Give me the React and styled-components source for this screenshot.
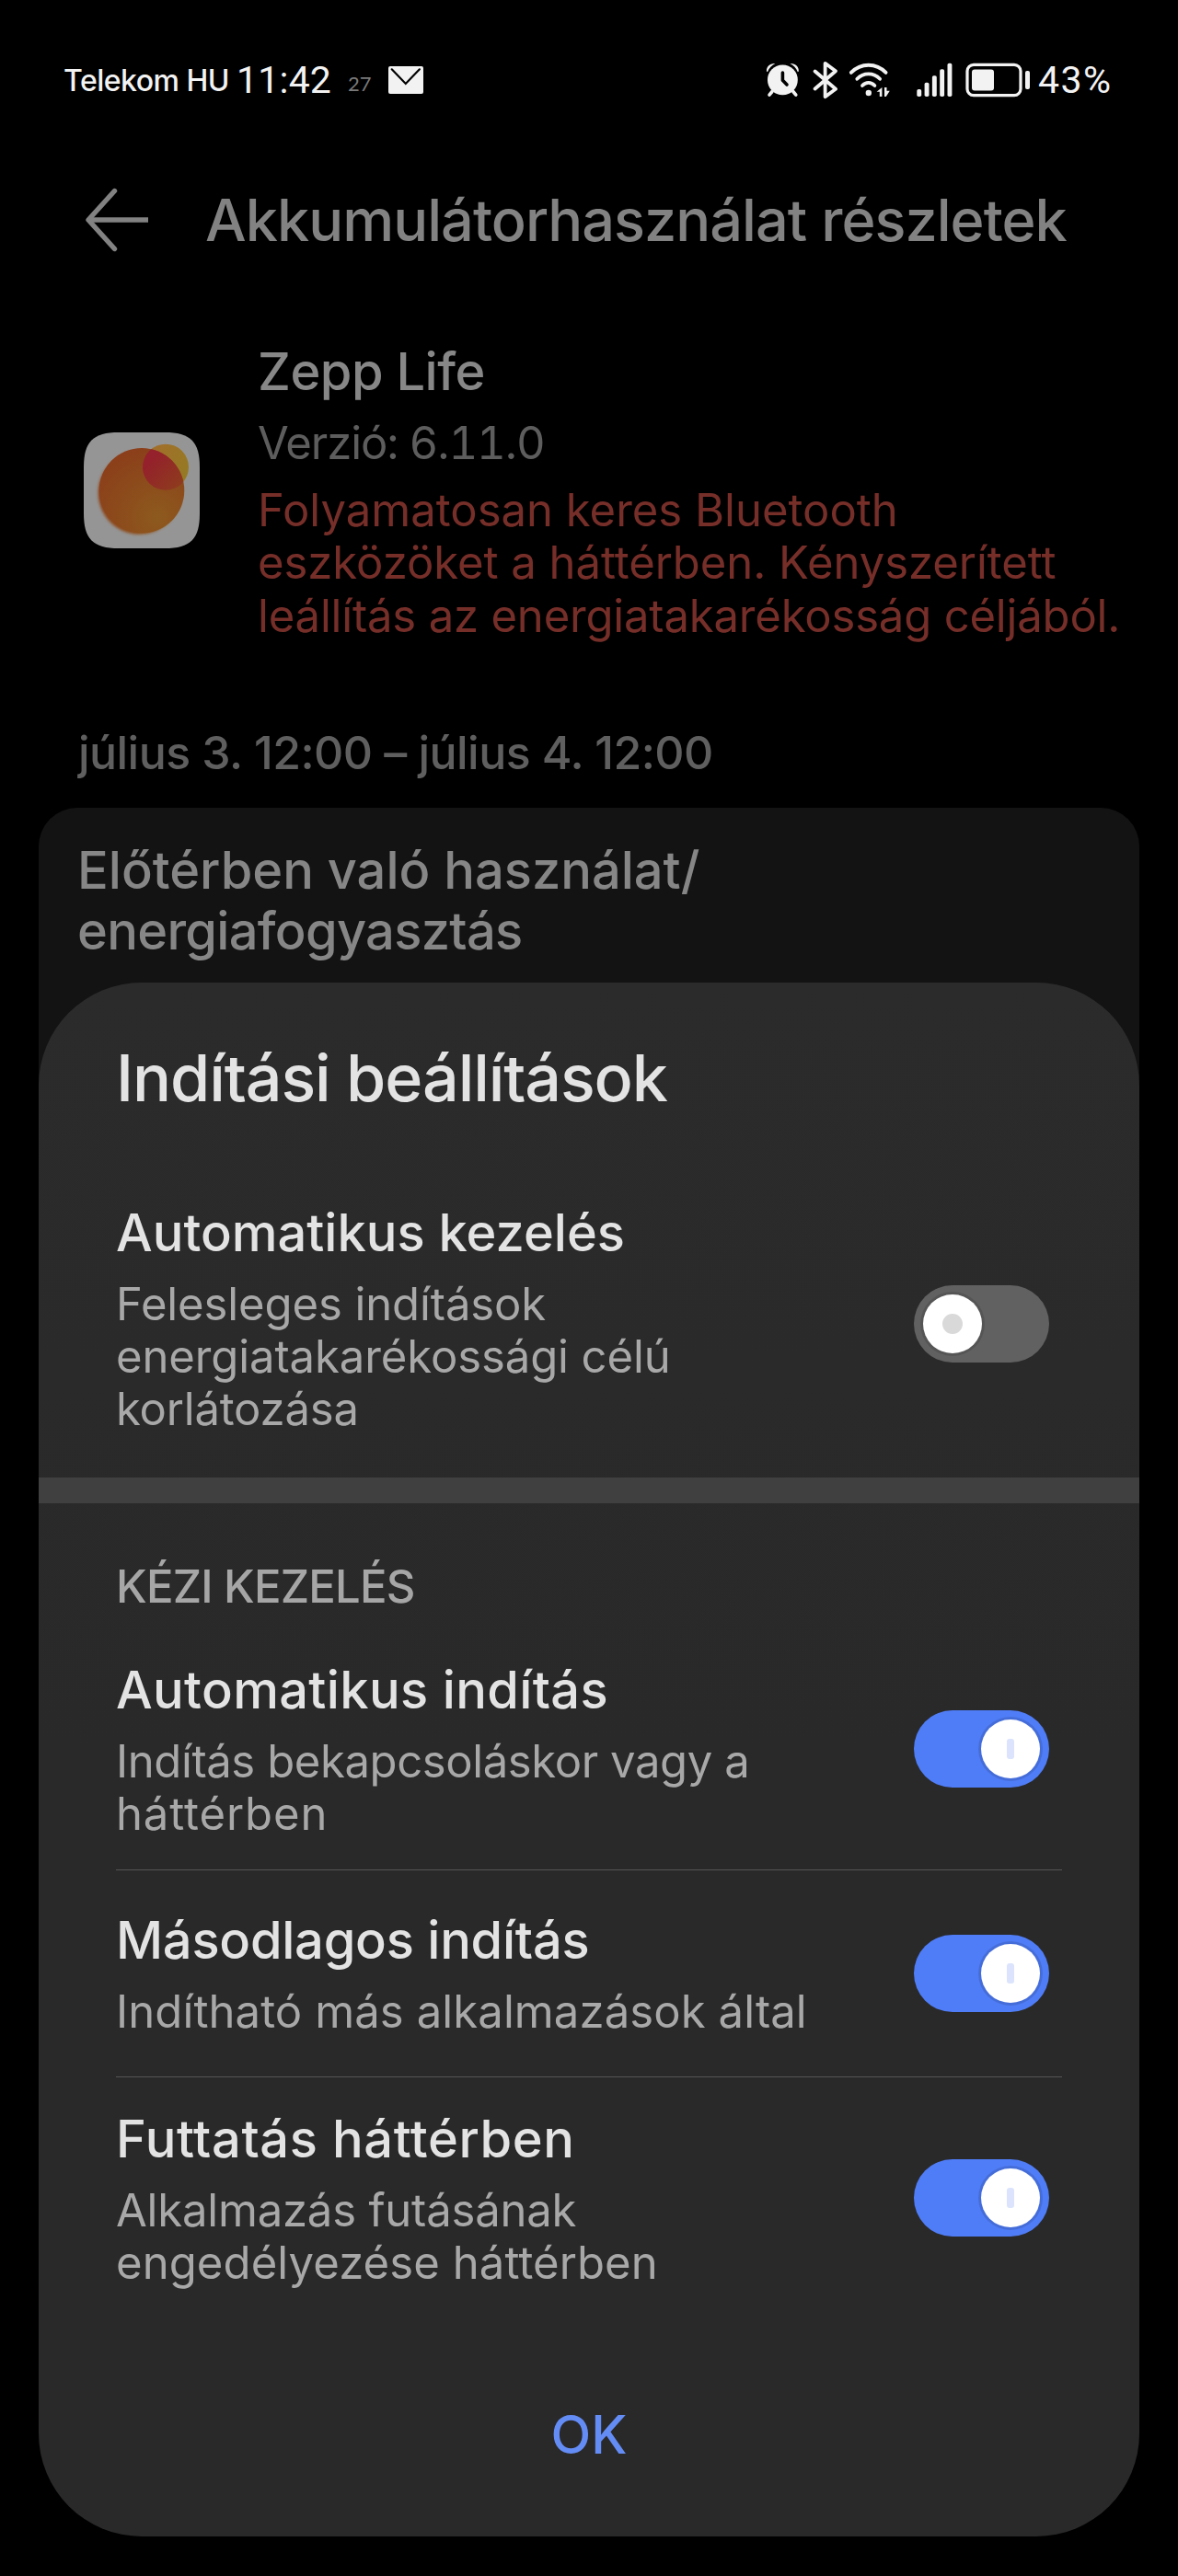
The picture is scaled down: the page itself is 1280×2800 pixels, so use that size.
import React, { useState } from 'react';
import styled, { createGlobalStyle } from 'styled-components';


const GlobalStyle = createGlobalStyle`
  * {
    box-sizing: border-box;
  }
  body {
    margin: 0;
    background: #000;
    font-family: Inter, 'Liberation Sans', sans-serif;
  }
`;

const Screen = styled.div`
  position: relative;
  width: 1280px;
  height: 2800px;
  overflow: hidden;
  background: #000;
`;

// one line of a text block, with its own tracking
const Line = styled.span`
  display: block;
  letter-spacing: ${p => p.$track || 0}px;
  white-space: nowrap;
`;

/* status bar */

const StatusBar = styled.div`
  display: flex;
  align-items: center;
  justify-content: space-between;
  height: 174px;
  padding: 0 72px 0 69px;
  color: #f2f2f2;
`;

const StatusGroup = styled.div`
  display: flex;
  align-items: center;

  svg {
    display: block;
    flex: none;
  }
`;

const Carrier = styled.span`
  font-size: 32px;
  font-weight: 500;
  letter-spacing: -0.5px;
`;

const Clock = styled.span`
  width: 103px;
  margin-left: 8px;
  font-family: Roboto, sans-serif;
  font-size: 41px;
  font-weight: 450;
  letter-spacing: 0.2px;
  white-space: nowrap;
`;

const NetSpeed = styled.span`
  width: 26px;
  margin: 6px 18px 0 18px;
  font-family: Lato, sans-serif;
  font-size: 22px;
  color: #7a7a7a;
`;

const Percent = styled.span`
  width: 80px;
  font-family: Roboto, sans-serif;
  font-size: 41px;
  font-weight: 450;
  letter-spacing: 1.4px;
  white-space: nowrap;
`;

const Spacer = styled.i`
  flex: none;
  width: ${p => p.$w}px;
`;

/* page under the dialog */

const AppBar = styled.header`
  display: flex;
  align-items: center;
  gap: 59px;
  height: 130px;
  padding-left: 92px;
`;

const PageTitle = styled.h1`
  margin: 0;
  font-size: 63px;
  font-weight: 500;
  letter-spacing: -0.95px;
  line-height: 80px;
  white-space: nowrap;
  color: #828282;
`;

const AppInfo = styled.section`
  display: flex;
  align-items: flex-start;
  gap: 63px;
  padding: 67px 0 0 91px;

  svg {
    flex: none;
    margin-top: 99px;
  }
`;

const AppText = styled.div`
  display: flex;
  flex-direction: column;
  gap: 16px;
`;

const AppName = styled.div`
  font-size: 56px;
  font-weight: 500;
  line-height: 66px;
  letter-spacing: -0.5px;
  color: #878787;
`;

const Version = styled.div`
  font-size: 49px;
  line-height: 57px;
  letter-spacing: -1.05px;
  font-variant-numeric: tabular-nums;
  color: #5d5d5d;
`;

const Warning = styled.div`
  font-size: 49px;
  line-height: 57.3px;
  color: #762e29;
`;

const Period = styled.div`
  margin: 87px 0 27px 85px;
  font-size: 50px;
  font-weight: 500;
  line-height: 66px;
  letter-spacing: -0.55px;
  color: #5f5f5f;
`;

const UsageCard = styled.section`
  height: 500px;
  margin: 0 42px;
  padding: 35px 42px;
  border-radius: 42px;
  background: #131313;
  color: #868686;
  font-size: 56px;
  font-weight: 500;
  line-height: 66px;
`;

/* dialog */

const Sheet = styled.div`
  position: absolute;
  left: 42px;
  bottom: 43px;
  display: flex;
  flex-direction: column;
  width: 1196px;
  height: 1689px;
  padding: 62px 0 77px;
  border-radius: 112px;
  background: linear-gradient(#2b2b2b, #292929 50%);
`;

const SheetTitle = styled.h2`
  margin: 0 84px 58px;
  font-size: 70px;
  font-weight: 500;
  line-height: 84px;
  letter-spacing: -1.1px;
  color: #e3e3e3;
`;

const Band = styled.div`
  height: 28px;
  background: #404040;
`;

const SectionLabel = styled.div`
  margin: 62px 84px 17px;
  font-size: 49px;
  font-weight: 500;
  line-height: 57px;
  letter-spacing: -0.8px;
  color: #a6a6a6;
`;

const Row = styled.div`
  display: flex;
  align-items: center;
  justify-content: space-between;
  margin: 0 84px;
  padding: ${p => p.$pad} 14px ${p => p.$padBottom} 0;
  border-bottom: ${p => (p.$line ? '1px solid #555' : 'none')};
`;

const RowTitle = styled.div`
  font-size: 56px;
  font-weight: 500;
  line-height: 66px;
  letter-spacing: ${p => p.$track || 0}px;
  color: #e3e3e3;
`;

const RowText = styled.div`
  margin-top: 16px;
  font-size: 49px;
  line-height: 57px;
  color: #a8a8a8;
`;

const Track = styled.button`
  display: flex;
  flex: none;
  align-items: center;
  justify-content: ${p => (p.$on ? 'flex-end' : 'flex-start')};
  width: 147px;
  height: 84px;
  margin: ${p => p.$nudge}px 0 0;
  padding: 0 10px;
  border: 0;
  border-radius: 42px;
  background: ${p => (p.$on ? '#4f7df7' : '#616161')};
`;

const Knob = styled.span`
  display: flex;
  align-items: center;
  justify-content: center;
  width: 64px;
  height: 64px;
  border-radius: 50%;
  background: #fff;
  box-shadow: 0 0 0 3px rgba(0, 0, 0, 0.12);

  &::after {
    content: '';
    width: ${p => (p.$on ? 8 : 22)}px;
    height: 22px;
    border-radius: ${p => (p.$on ? 3 : 11)}px;
    background: ${p => (p.$on ? '#dbe4fc' : '#d9d9d9')};
  }
`;

const OkButton = styled.button`
  align-self: center;
  margin-top: auto;
  padding: 0 40px;
  border: 0;
  background: none;
  font: 500 57px/66px Inter, sans-serif;
  color: #648cf5;
`;


const MailIcon = () => (
  <svg width="38" height="30" viewBox="0 0 38 30">
    <rect width="38" height="30" rx="2" fill="#f2f2f2" />
    <path d="M3.7 3.3 18.8 19 33.9 3.3" fill="none" stroke="#000" strokeWidth="2.2" strokeLinecap="round" />
  </svg>
);

const AlarmIcon = () => (
  <svg width="37" height="38" viewBox="0 0 37 38" fill="#f2f2f2">
    <circle cx="18.4" cy="18.9" r="16.4" />
    <path d="M1 9.5C.6 4.5 4.5.6 10.3 1 6.6 3 3.6 6 2 10.3Z" />
    <path d="M35.8 9.5C36.2 4.5 32.3.6 26.5 1c3.7 2 6.7 5 8.3 9.3Z" />
    <path d="M7 31.5 4 35.2M29.8 31.5l3 3.7" stroke="#f2f2f2" strokeWidth="3.6" strokeLinecap="round" />
    <path d="M18.4 11v8.300l4.6 4.7" fill="none" stroke="#000" strokeWidth="3.6" strokeLinecap="round" strokeLinejoin="round" />
  </svg>
);

const BluetoothIcon = () => (
  <svg width="28" height="42" viewBox="0 0 28 42" fill="none" stroke="#f2f2f2" strokeWidth="3.8" strokeLinecap="round" strokeLinejoin="round">
    <path d="M2.6 11.5 25 30.8 13.6 39.2V2.8L25 11.2 2.6 30.5" />
  </svg>
);

const WifiIcon = () => (
  <svg width="45" height="40" viewBox="0 0 45 40" fill="none" stroke="#f2f2f2" strokeWidth="3.8" strokeLinecap="round">
    <path d="M2.8 11.9C13.5 1 29.9 1 40.6 11.9" />
    <path d="M9.3 18.8c7-7.2 17.8-7.2 24.8 0" />
    <path d="M15 26c4-4.2 9.4-4.2 13.4 0" />
    <circle cx="21.8" cy="34" r="3.2" fill="#f2f2f2" stroke="none" />
    <path d="M36.4 28v10h-2.6v-5.2h-3.2ZM39 28h2.5v3.8h3.3L40.8 38H39Z" fill="#f2f2f2" stroke="none" />
  </svg>
);

const SignalIcon = () => (
  <svg width="39" height="38" viewBox="0 0 39 38" fill="#f2f2f2">
    {[29, 21.7, 14.3, 7.3, 0.7].map((y, i) => (
      <rect key={y} x={0.3 + i * 8.3} y={y} width="4.9" height={37 - y} rx="1.8" />
    ))}
  </svg>
);

const BatteryIcon = () => (
  <svg width="70" height="38" viewBox="0 0 70 38" fill="#f2f2f2">
    <rect x="2" y="2.3" width="58" height="33.4" rx="7" fill="none" stroke="#f2f2f2" strokeWidth="3.2" />
    <rect x="7" y="7.5" width="24" height="23" rx="3" />
    <rect x="65" y="9" width="5" height="20" rx="2" />
  </svg>
);

const BackIcon = () => (
  <svg width="72" height="70" viewBox="0 0 72 70" fill="none" stroke="#828282" strokeWidth="5.4" strokeLinejoin="round">
    <path d="M32.5 3.500 4 35l28.500 31.500" strokeLinecap="round" />
    <path d="M4 35h65" />
  </svg>
);

const ZeppIcon = () => (
  <svg width="126" height="126" viewBox="0 0 126 126">
    <defs>
      <radialGradient id="sun" gradientUnits="userSpaceOnUse" cx="80" cy="92" r="80">
        <stop offset="0" stopColor="#8d5a1e" />
        <stop offset="0.6" stopColor="#8c491b" />
        <stop offset="1" stopColor="#8b3e1a" />
      </radialGradient>
      <linearGradient id="moon" x1="0" y1="0" x2="1" y2="0.6">
        <stop offset="0.3" stopColor="#a0702a" />
        <stop offset="1" stopColor="#957a24" />
      </linearGradient>
      <linearGradient id="overlap" x1="0" y1="0.2" x2="0.9" y2="1">
        <stop offset="0.2" stopColor="#94212b" />
        <stop offset="1" stopColor="#8d3f1c" />
      </linearGradient>
      <clipPath id="sunClip">
        <circle cx="63" cy="63.3" r="46.3" />
      </clipPath>
      <filter id="glow" x="-20%" y="-20%" width="140%" height="140%">
        <feGaussianBlur stdDeviation="1.8" />
      </filter>
    </defs>
    <path
      fill="#959595"
      d="M0 38C0 10 10 0 38 0h50c28 0 38 10 38 38v50c0 28-10 38-38 38H38C10 126 0 116 0 88Z"
    />
    <circle cx="89" cy="37.7" r="25" fill="url(#moon)" />
    <circle cx="60.5" cy="66" r="44.8" fill="url(#sun)" filter="url(#glow)" />
    <circle cx="63" cy="63.3" r="46.3" fill="url(#sun)" />
    <circle cx="89" cy="37.7" r="25" fill="url(#overlap)" clipPath="url(#sunClip)" />
  </svg>
);


const Toggle = ({ on, nudge, onClick }) => (
  <Track type="button" role="switch" aria-checked={on} $on={on} $nudge={nudge} onClick={onClick}>
    <Knob $on={on} />
  </Track>
);

const Lines = ({ lines }) => lines.map(([text, track]) => (
  <Line key={text} $track={track}>{text}</Line>
));

const warning = [
  ['Folyamatosan keres Bluetooth', 0],
  ['eszközöket a háttérben. Kényszerített', -0.05],
  ['leállítás az energiatakarékosság céljából.', -0.18],
];

const autoRow = {
  id: 'auto',
  title: 'Automatikus kezelés',
  lines: [
    ['Felesleges indítások', -0.1],
    ['energiatakarékossági célú', -0.1],
    ['korlátozása', -0.2],
  ],
  pad: '35px',
  padBottom: '46px',
  nudge: 11,
};

const manualRows = [
  {
    id: 'autoStart',
    title: 'Automatikus indítás',
    titleTrack: 0.35,
    lines: [
      ['Indítás bekapcsoláskor vagy a', -0.4],
      ['háttérben', 0.9],
    ],
    pad: '34px',
    padBottom: '32px',
    nudge: -3,
    line: true,
  },
  {
    id: 'secondary',
    title: 'Másodlagos indítás',
    titleTrack: -0.25,
    lines: [['Indítható más alkalmazások által', 0.1]],
    pad: '43px',
    padBottom: '42px',
    nudge: -1,
    line: true,
  },
  {
    id: 'background',
    title: 'Futtatás háttérben',
    titleTrack: 0.6,
    lines: [
      ['Alkalmazás futásának', -0.2],
      ['engedélyezése háttérben', 0.1],
    ],
    pad: '34px',
    padBottom: '32px',
    nudge: -3,
  },
];

const SettingRow = ({ row, on, onToggle }) => (
  <Row $pad={row.pad} $padBottom={row.padBottom} $line={row.line}>
    <div>
      <RowTitle $track={row.titleTrack}>{row.title}</RowTitle>
      <RowText><Lines lines={row.lines} /></RowText>
    </div>
    <Toggle on={on} nudge={row.nudge} onClick={onToggle} />
  </Row>
);

export default function App() {
  const [state, setState] = useState({
    auto: false,
    autoStart: true,
    secondary: true,
    background: true,
  });

  const flip = id => setState({ ...state, [id]: !state[id] });

  return (
    <Screen>
      <GlobalStyle />

      <StatusBar>
        <StatusGroup>
          <Carrier>Telekom HU</Carrier>
          <Clock>11:42</Clock>
          <NetSpeed>27</NetSpeed>
          <MailIcon />
        </StatusGroup>
        <StatusGroup>
          <AlarmIcon />
          <Spacer $w={14} />
          <BluetoothIcon />
          <Spacer $w={11} />
          <WifiIcon />
          <Spacer $w={29} />
          <SignalIcon />
          <Spacer $w={14} />
          <BatteryIcon />
          <Spacer $w={9} />
          <Percent>43%</Percent>
        </StatusGroup>
      </StatusBar>

      <AppBar>
        <BackIcon />
        <PageTitle>Akkumulátorhasználat részletek</PageTitle>
      </AppBar>

      <AppInfo>
        <ZeppIcon />
        <AppText>
          <AppName>Zepp Life</AppName>
          <Version>Verzió: 6.11.0</Version>
          <Warning><Lines lines={warning} /></Warning>
        </AppText>
      </AppInfo>

      <Period>július 3. 12:00 – július 4. 12:00</Period>
      <UsageCard>
        <Line>Előtérben való használat/</Line>
        <Line $track={-0.7}>energiafogyasztás</Line>
      </UsageCard>

      <Sheet role="dialog">
        <SheetTitle>Indítási beállítások</SheetTitle>
        <SettingRow row={autoRow} on={state.auto} onToggle={() => flip('auto')} />
        <Band />
        <SectionLabel>KÉZI KEZELÉS</SectionLabel>
        {manualRows.map(row => (
          <SettingRow key={row.id} row={row} on={state[row.id]} onToggle={() => flip(row.id)} />
        ))}
        <OkButton>OK</OkButton>
      </Sheet>
    </Screen>
  );
}
